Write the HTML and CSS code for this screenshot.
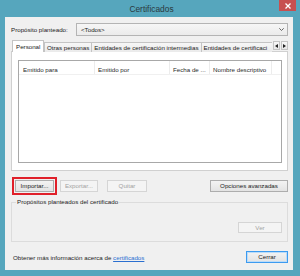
FILE: index.html
```html
<!DOCTYPE html>
<html lang="es">
<head>
<meta charset="utf-8">
<title>Certificados</title>
<link rel="stylesheet" href="styles.css">
</head>
<body>
<div class="window">
  <div class="titlebar">
    <span class="title">Certificados</span>
    <div class="close"><svg width="6" height="6" viewBox="0 0 6 6"><path d="M0.5 0.5 L5.5 5.5 M5.5 0.5 L0.5 5.5" stroke="#fff" stroke-width="1.3"/></svg></div>
  </div>
  <div class="client">
    <div class="purpose-row">
      <span class="purpose-label">Propósito planteado:</span>
      <div class="combo">
        <span>&lt;Todos&gt;</span>
        <svg class="chev" width="5" height="3" viewBox="0 0 5 3"><path d="M0.3 0.3 L2.5 2.5 L4.7 0.3" fill="none" stroke="#555" stroke-width="0.9"/></svg>
      </div>
    </div>
    <div class="tabstrip">
      <div class="tab selected">Personal</div>
      <div class="tab">Otras personas</div>
      <div class="tab">Entidades de certificación intermedias</div>
      <div class="tab last">Entidades de certificaci</div>
      <div class="spin">
        <div class="spinbtn"><svg width="3" height="4" viewBox="0 0 3 4"><path d="M3 0 L0 2 L3 4 Z" fill="#222"/></svg></div>
        <div class="spinbtn"><svg width="3" height="4" viewBox="0 0 3 4"><path d="M0 0 L3 2 L0 4 Z" fill="#222"/></svg></div>
      </div>
    </div>
    <div class="panel">
      <div class="list">
        <div class="list-head">
          <div class="col c1">Emitido para</div>
          <div class="col c2">Emitido por</div>
          <div class="col c3">Fecha de ...</div>
          <div class="col c4">Nombre descriptivo</div>
        </div>
      </div>
    </div>
    <div class="button-row">
      <button class="btn import">Importar...</button>
      <button class="btn export" disabled>Exportar...</button>
      <button class="btn remove" disabled>Quitar</button>
      <span class="spacer"></span>
      <button class="btn advanced">Opciones avanzadas</button>
    </div>
    <fieldset class="group">
      <legend>Propósitos planteados del certificado</legend>
      <div class="group-body">
        <button class="btn view" disabled>Ver</button>
      </div>
    </fieldset>
    <div class="footer">
      <span class="info">Obtener más información acerca de <a href="#" class="link">certificados</a></span>
      <button class="btn close-btn">Cerrar</button>
    </div>
  </div>
</div>
</body>
</html>
```
FILE: styles.css
```css
* { box-sizing: border-box; }
html, body {
  margin: 0;
  padding: 0;
  width: 300px;
  height: 276px;
  overflow: hidden;
  background: #56a6bd;
  font-family: "Liberation Sans", Arial, sans-serif;
  font-size: 6.2px;
  color: #1a1a1a;
}
.window {
  width: 300px;
  height: 276px;
  padding: 0 7px 6px 5px;
  display: flex;
  flex-direction: column;
}
.titlebar {
  height: 17px;
  position: relative;
  display: flex;
  align-items: center;
  justify-content: center;
}
.title {
  font-size: 8.4px;
  color: #2b3a40;
  margin-left: 5px;
}
.close {
  position: absolute;
  top: 0;
  right: -3px;
  width: 17px;
  height: 11px;
  background: #c75050;
  display: flex;
  align-items: center;
  justify-content: center;
}
.client {
  flex: 1;
  background: #f0f0f0;
  padding: 0 5px 0 6px;
  display: flex;
  flex-direction: column;
}
.purpose-row {
  margin-top: 6px;
  height: 13px;
  display: flex;
  align-items: center;
}
.purpose-label {
  width: 65px;
}
.combo {
  flex: 1;
  height: 13px;
  border: 1px solid #b4b4b4;
  background: linear-gradient(#f6f6f6, #ebebeb);
  display: flex;
  align-items: center;
  justify-content: space-between;
  padding: 0 3px 0 4px;
}
.tabstrip {
  margin-top: 4px;
  height: 12px;
  display: flex;
  align-items: flex-end;
  position: relative;
  z-index: 1;
}
.tab {
  height: 10px;
  border: 1px solid #c4c4c4;
  border-bottom: none;
  background: linear-gradient(#f7f7f7, #eaeaea);
  padding: 0 2px;
  display: flex;
  align-items: center;
  white-space: nowrap;
  flex: none;
  margin-left: -1px;
}
.tab.selected {
  height: 12px;
  background: #fff;
  margin-left: 1px;
  margin-right: 1px;
  padding: 0 3px;
  width: 32px;
  border-color: #c4c4c4;
}
.tab.last {
  flex: 1 1 auto;
  border-right: none;
}
.spin {
  display: flex;
  height: 10px;
  flex: none;
  align-self: center;
}
.spinbtn {
  width: 7px;
  height: 9px;
  border: 1px solid #c4c4c4;
  background: linear-gradient(#f7f7f7, #e8e8e8);
  display: flex;
  align-items: center;
  justify-content: center;
  margin-left: 1px;
}
.panel {
  height: 120px;
  background: #fff;
  border: 1px solid #d0d0d0;
  margin-top: -1px;
  padding: 8px 5px 7px 6px;
}
.list {
  height: 100%;
  border: 1px solid #a8a8a8;
  background: #fff;
}
.list-head {
  display: flex;
  height: 14px;
  border-bottom: 1px solid #f0f0f0;
}
.col {
  border-right: 1px solid #ececec;
  padding-left: 4px;
  padding-top: 5px;
  color: #2a2a2a;
  white-space: nowrap;
  overflow: hidden;
}
.c1 { width: 76px; }
.c2 { width: 75px; padding-left: 3px; }
.c3 { width: 40px; padding-left: 3px; }
.c4 { width: 62px; padding-left: 3px; }
.button-row {
  margin-top: 9px;
  height: 12px;
  display: flex;
  padding-left: 4px;
}
.btn {
  height: 12px;
  border: 1px solid #adadad;
  background: linear-gradient(#f3f3f3, #e3e3e3);
  font-family: "Liberation Sans", Arial, sans-serif;
  font-size: 6.2px;
  color: #1a1a1a;
  padding: 0;
  margin: 0;
  line-height: 10px;
}
.btn:disabled {
  border-color: #d5d5d5;
  background: #f4f4f4;
  color: #a3a3a3;
}
.import {
  width: 39px;
  outline: 2px solid #e0202a;
  outline-offset: 1px;
}
.export { width: 38px; margin-left: 6px; }
.remove { width: 40px; margin-left: 9px; }
.spacer { flex: 1; }
.advanced { width: 78px; }
.group {
  margin: 6px 0 0 0;
  padding: 0 5px 0 4px;
  height: 44px;
  border: 1px solid #dcdcdc;
  min-width: 0;
}
.group legend {
  padding: 0 1px;
  margin-left: 0;
  line-height: 8px;
  color: #1a1a1a;
}
.group-body {
  height: 35px;
  display: flex;
  justify-content: flex-end;
  align-items: flex-end;
  padding-bottom: 8px;
}
.view { width: 44px; height: 11px; }
.footer {
  margin-top: 9px;
  height: 12px;
  display: flex;
  align-items: center;
  justify-content: space-between;
  padding-left: 2px;
}
.link { color: #2a6fd0; text-decoration: underline; }
.close-btn {
  width: 42px;
  border-color: #3c9bf0;
  box-shadow: inset 0 0 0 1px #bcdcf8;
}
```
